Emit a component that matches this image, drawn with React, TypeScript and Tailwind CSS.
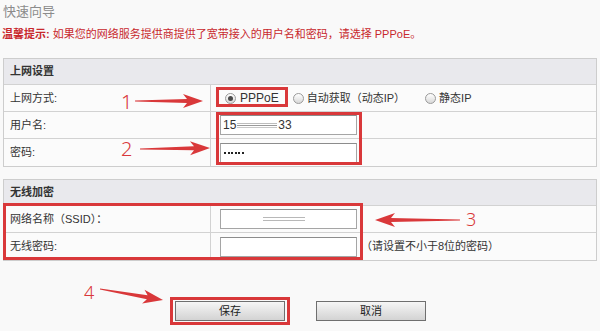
import React from "react";

const RED = "#d9383a";

function arrowPoints(x1: number, y1: number, x2: number, y2: number) {
  const dx = x2 - x1;
  const dy = y2 - y1;
  const len = Math.hypot(dx, dy);
  const ux = dx / len;
  const uy = dy / len;
  const nx = -uy;
  const ny = ux;
  const hl = 20;
  const hw = 7;
  const bx = x2 - ux * hl;
  const by = y2 - uy * hl;
  const jx = bx + ux * 4;
  const jy = by + uy * 4;
  const pts = [
    [x1 + nx * 0.6, y1 + ny * 0.6],
    [jx + nx * 2, jy + ny * 2],
    [bx + nx * hw, by + ny * hw],
    [x2, y2],
    [bx - nx * hw, by - ny * hw],
    [jx - nx * 2, jy - ny * 2],
    [x1 - nx * 0.6, y1 - ny * 0.6],
  ];
  return pts.map((p) => p.map((v) => v.toFixed(1)).join(",")).join(" ");
}

function Radio({ checked }: { checked?: boolean }) {
  return (
    <span className="flex h-[11px] w-[11px] items-center justify-center rounded-full border border-[#9a9a9a] bg-linear-to-b from-[#ffffff] to-[#d8d8d8]">
      {checked && <span className="h-[5px] w-[5px] rounded-full bg-[#4a4a4a]" />}
    </span>
  );
}

function Field({ children }: { children?: React.ReactNode }) {
  return (
    <div className="flex h-[20px] w-[137px] items-center border border-[#a5a5a5] border-t-[#8c8c8c] bg-white px-[2px] text-[12px] text-[#333]">
      {children}
    </div>
  );
}

function Row({ label, children, last }: { label: string; children?: React.ReactNode; last?: boolean }) {
  return (
    <div className={`grid h-[27px] grid-cols-[207px_1fr] bg-[#fbfbfb] ${last ? "" : "border-b border-[#d2d2d2]"}`}>
      <div className="flex items-center border-r border-[#d2d2d2] pl-[6px] text-[11px] text-[#333]">{label}</div>
      <div className="flex items-center pl-[9px]">{children}</div>
    </div>
  );
}

function Section({ title, children }: { title: string; children: React.ReactNode }) {
  return (
    <div className="mx-[3px] border border-[#cdcdcd]">
      <div className="flex h-[26px] items-center border-b border-[#d2d2d2] bg-[#e9e9ed] pl-[6px] text-[11px] font-bold text-[#333]">
        {title}
      </div>
      {children}
    </div>
  );
}

export default function App() {
  return (
    <div
      className="relative h-[331px] w-[600px] overflow-hidden bg-[#f9f9f9]"
      style={{ fontFamily: '"Liberation Sans", "Noto Sans CJK SC", sans-serif' }}
    >
      <div className="pl-[3px] pt-[4px] text-[13px] leading-[16px] text-[#8c8c8c]">快速向导</div>
      <div className="mt-[7px] pl-[2px] text-[11px] leading-[14px] text-[#c8282d]">
        <span className="font-bold">温馨提示:</span> 如果您的网络服务提供商提供了宽带接入的用户名和密码，请选择 PPPoE。
      </div>

      <div className="mt-[17px]">
        <Section title="上网设置">
          <Row label="上网方式:">
            <div className="flex items-center pl-[5px] text-[11px] text-[#333]">
              <Radio checked />
              <span className="ml-[4px] text-[12px]">PPPoE</span>
              <span className="ml-[14px]">
                <Radio />
              </span>
              <span className="ml-[3px]">自动获取（动态IP）</span>
              <span className="ml-[20px]">
                <Radio />
              </span>
              <span className="ml-[3px]">静态IP</span>
            </div>
          </Row>
          <Row label="用户名:">
            <Field>
              <span>15</span>
              <span className="mx-[1px] flex w-[40px] flex-col gap-[1px]">
                <span className="h-px bg-[#bdbdbd]" />
                <span className="h-px bg-[#9a9a9a]" />
                <span className="h-px bg-[#c8c8c8]" />
              </span>
              <span>33</span>
            </Field>
          </Row>
          <Row label="密码:" last>
            <Field>
              <span className="ml-[1px] flex gap-[1.5px]">
                <span className="h-[2px] w-[2px] bg-[#222]" />
                <span className="h-[2px] w-[2px] bg-[#222]" />
                <span className="h-[2px] w-[2px] bg-[#222]" />
                <span className="h-[2px] w-[2px] bg-[#222]" />
                <span className="h-[2px] w-[2px] bg-[#222]" />
                <span className="h-[2px] w-[2px] bg-[#222]" />
              </span>
            </Field>
          </Row>
        </Section>
      </div>

      <div className="mt-[12px]">
        <Section title="无线加密">
          <Row label="网络名称（SSID）：">
            <Field>
              <span className="ml-[40px] flex w-[42px] flex-col gap-[2px]">
                <span className="h-px bg-[#b8b8b8]" />
                <span className="h-px bg-[#b8b8b8]" />
              </span>
            </Field>
          </Row>
          <Row label="无线密码:" last>
            <Field />
            <span className="ml-[4px] text-[11px] text-[#333]">（请设置不小于8位的密码）</span>
          </Row>
        </Section>
      </div>

      <div className="mt-[40px] flex gap-[31px] pl-[175px]">
        <button className="flex h-[20px] w-[110px] items-center justify-center border border-[#6f6f6f] bg-linear-to-b from-[#f6f6f6] to-[#d3d3d3] text-[11px] text-[#222]">
          保存
        </button>
        <button className="flex h-[20px] w-[110px] items-center justify-center border border-[#6f6f6f] bg-linear-to-b from-[#f6f6f6] to-[#d3d3d3] text-[11px] text-[#222]">
          取消
        </button>
      </div>

      {/* annotations */}
      <div className="pointer-events-none absolute left-[216px] top-[87px] h-[20px] w-[72px] border-[3px] border-[#d9383a]" />
      <div className="pointer-events-none absolute left-[216px] top-[112px] h-[53px] w-[146px] border-[3px] border-[#d9383a]" />
      <div className="pointer-events-none absolute left-[3px] top-[203px] h-[57px] w-[360px] border-[3px] border-[#d9383a]" />
      <div className="pointer-events-none absolute left-[170px] top-[297px] h-[28px] w-[120px] border-[3px] border-[#d9383a]" />

      <svg className="pointer-events-none absolute left-0 top-0" width="600" height="331">
        <polygon points={arrowPoints(135, 101, 203, 101)} fill={RED} />
        <polygon points={arrowPoints(140, 149, 210, 148)} fill={RED} />
        <polygon points={arrowPoints(460, 220, 375, 220)} fill={RED} />
        <polygon points={arrowPoints(100, 289, 163, 300)} fill={RED} />
      </svg>

      <span className="absolute left-[121px] top-[92px] text-[20px] font-light leading-none text-[#d9383a]" style={{ fontFamily: '"Noto Sans", sans-serif' }}>1</span>
      <span className="absolute left-[121px] top-[139px] text-[20px] font-light leading-none text-[#d9383a]" style={{ fontFamily: '"Noto Sans", sans-serif' }}>2</span>
      <span className="absolute left-[466px] top-[210px] text-[18px] font-light leading-none text-[#d9383a]" style={{ fontFamily: '"Noto Sans", sans-serif' }}>3</span>
      <span className="absolute left-[84px] top-[283px] text-[18px] font-light leading-none text-[#d9383a]" style={{ fontFamily: '"Noto Sans", sans-serif' }}>4</span>
    </div>
  );
}
